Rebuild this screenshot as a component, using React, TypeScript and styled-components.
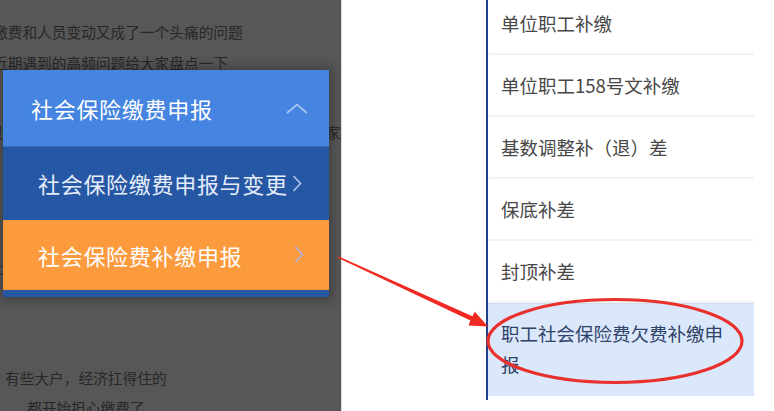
import React from "react";
import styled, { createGlobalStyle } from "styled-components";

const GlobalStyle = createGlobalStyle`
  html, body {
    margin: 0;
    padding: 0;
    width: 774px;
    height: 411px;
    overflow: hidden;
    background: #fff;
  }
  body {
    font-family: "Noto Sans CJK SC", "Noto Sans", sans-serif;
  }
`;

type Variant = "blue" | "orange";

const articleLines = [
  { text: "缴费和人员变动又成了一个头痛的问题", top: 22, indent: -7 },
  { text: "近期遇到的高频问题给大家盘点一下", top: 11, indent: -7 },
  { text: "很多单位在办理社保业务时都有疑问，下面就告诉大家", top: 49, indent: -12 },
  { text: "社保费的缴纳关系到每一位职工的切身利益", top: 116, indent: -12 },
  { text: "有些大户，经济扛得住的", top: 90, indent: 5 },
  { text: "都开始担心缴费了", top: 10, indent: 27 },
];

const subItems: { label: string; variant: Variant }[] = [
  { label: "社会保险缴费申报与变更", variant: "blue" },
  { label: "社会保险费补缴申报", variant: "orange" },
];

const listItems = [
  "单位职工补缴",
  "单位职工158号文补缴",
  "基数调整补（退）差",
  "保底补差",
  "封顶补差",
];

const ChevronUp = () => (
  <svg width="22" height="11" viewBox="0 0 22 11">
    <polyline
      points="1,10 11,1.5 21,10"
      fill="none"
      stroke="#a9c6f1"
      strokeWidth="1.7"
    />
  </svg>
);

const ChevronRight = ({ color }: { color: string }) => (
  <svg width="10" height="17" viewBox="0 0 10 17">
    <polyline
      points="1.5,1 8.5,8.5 1.5,16"
      fill="none"
      stroke={color}
      strokeWidth="1.7"
    />
  </svg>
);

export default function App() {
  return (
    <>
      <GlobalStyle />
      <Page>
        <LeftPane>
          {articleLines.map((line) => (
            <ArticleLine key={line.text} $top={line.top} $indent={line.indent}>
              {line.text}
            </ArticleLine>
          ))}

          <Popup>
            <PopupHeader>
              <span>社会保险缴费申报</span>
              <ChevronUp />
            </PopupHeader>
            {subItems.map((item) => (
              <SubItem key={item.label} $variant={item.variant}>
                <span>{item.label}</span>
                <ChevronRight
                  color={item.variant === "blue" ? "#aac3ec" : "#b3b0dc"}
                />
              </SubItem>
            ))}
            <PopupFooter />
          </Popup>
        </LeftPane>

        <RightPane>
          <MenuBox>
            {listItems.map((label) => (
              <MenuRow key={label}>{label}</MenuRow>
            ))}
            <ActiveRow>职工社会保险费欠费补缴申报</ActiveRow>
          </MenuBox>
        </RightPane>

        <Annotation viewBox="0 0 774 411">
          <polygon
            points="338.3,256.3 337.7,257.7 470.4,320.5 468.5,325.5 488,326.5 474.8,311.8 472.4,316.3"
            fill="#f02a22"
          />
          <ellipse
            cx="615"
            cy="341"
            rx="127"
            ry="41.5"
            fill="none"
            stroke="#e8302c"
            strokeWidth="3.2"
          />
        </Annotation>
      </Page>
    </>
  );
}

const Page = styled.div`
  position: relative;
  display: flex;
  width: 774px;
  height: 411px;
  overflow: hidden;
`;

const LeftPane = styled.div`
  position: relative;
  flex: none;
  width: 341px;
  height: 100%;
  background: #575757;
  border-right: 1px solid #d9d9d9;
  overflow: hidden;
`;

const ArticleLine = styled.p<{ $top: number; $indent: number }>`
  margin: ${(p) => p.$top}px 0 0 ${(p) => p.$indent}px;
  font-size: 14.7px;
  line-height: 20px;
  color: #272727;
  white-space: nowrap;
`;

const Popup = styled.div`
  position: absolute;
  left: 3px;
  top: 70px;
  width: 326px;
  display: flex;
  flex-direction: column;
  box-shadow: 0 0 10px 3px rgba(0, 0, 0, 0.28);
`;

const PopupHeader = styled.div`
  height: 76px;
  display: flex;
  align-items: center;
  justify-content: space-between;
  padding: 0 21px 0 28px;
  background: #4584e1;
  color: #fff;
  font-size: 22px;
  letter-spacing: 0.7px;
  border-bottom: 1px solid #3a6cbf;
`;

const SubItem = styled.div<{ $variant: Variant }>`
  height: ${(p) => (p.$variant === "blue" ? 72 : 69)}px;
  display: flex;
  align-items: center;
  justify-content: space-between;
  padding: 0 ${(p) => (p.$variant === "blue" ? 27 : 25)}px 0 35px;
  background: ${(p) => (p.$variant === "blue" ? "#2557a5" : "#fc9a3e")};
  color: ${(p) => (p.$variant === "blue" ? "#e6edf8" : "#fff")};
  font-size: 22px;
  letter-spacing: 0.7px;
  border-bottom: 1px solid
    ${(p) => (p.$variant === "blue" ? "#2a5aa4" : "#f0903a")};
`;

const PopupFooter = styled.div`
  height: 7px;
  background: #2557a5;
`;

const RightPane = styled.div`
  flex: 1;
  height: 100%;
  background: #fff;
  padding-left: 144px;
`;

const MenuBox = styled.div`
  width: 266px;
  margin-top: -7px;
  padding-bottom: 4px;
  border-left: 2px solid #1f3f8b;
`;

const MenuRow = styled.div`
  height: 60px;
  margin-left: 1px;
  display: flex;
  align-items: center;
  padding: 0 14px 0 12px;
  border-bottom: 2px solid #f2f2f2;
  font-size: 18.5px;
  color: #474747;

  &:last-of-type {
    height: 59px;
  }
`;

const ActiveRow = styled.div`
  padding: 14px 14px 16px 13px;
  border-top: 1px dotted #c6d2e2;
  background: #dbe8fc;
  font-size: 18.5px;
  line-height: 31px;
  color: #2f4268;
`;

const Annotation = styled.svg`
  position: absolute;
  inset: 0;
  width: 774px;
  height: 411px;
  pointer-events: none;
`;
